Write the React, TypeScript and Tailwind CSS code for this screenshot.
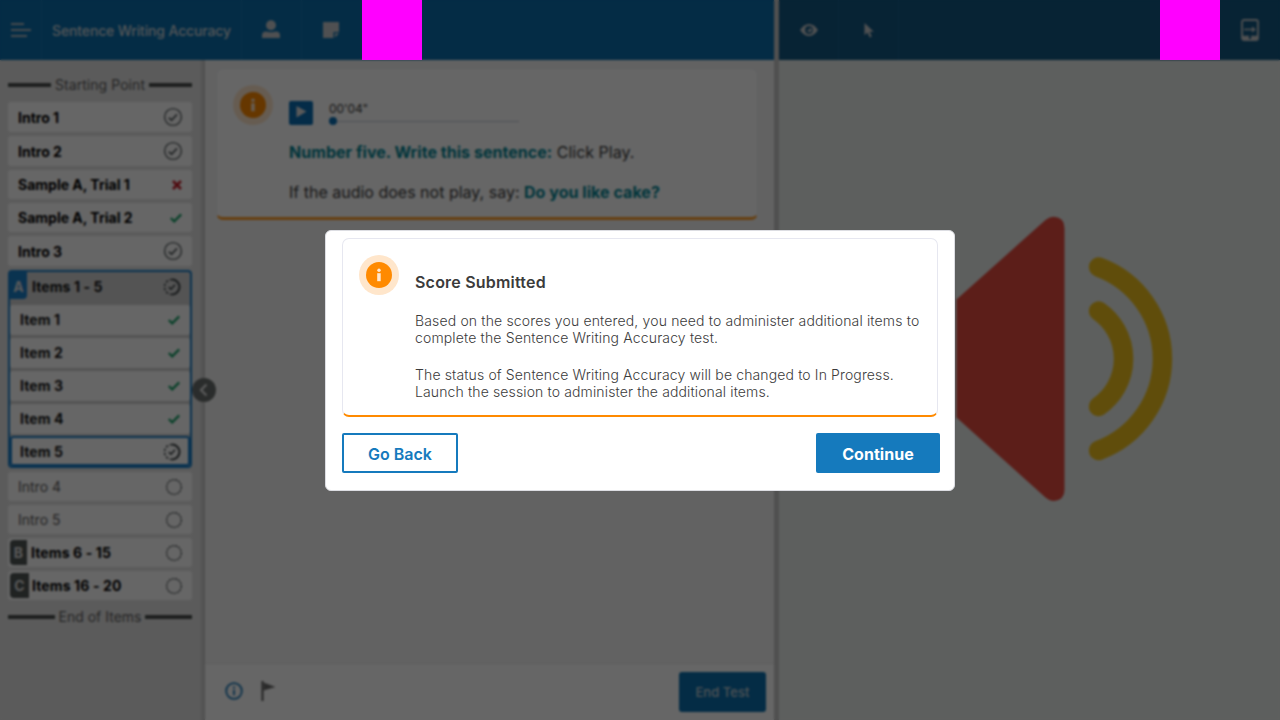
import type { ReactNode } from "react";

type Status = "circled" | "fail" | "pass" | "partial" | "todo";

function StatusIcon({ status }: { status: Status }) {
  if (status === "circled")
    return (
      <svg className="size-5" viewBox="0 0 20 20" fill="none">
        <circle cx="10" cy="10" r="8.4" stroke="#5f6668" strokeWidth="1.4" />
        <path d="M5.8 10.8 8.6 13.2 14 7.4" stroke="#5f6668" strokeWidth="1.8" />
      </svg>
    );
  if (status === "fail")
    return (
      <svg className="size-3" viewBox="0 0 12 12" fill="none">
        <path d="M2 2 10 10M10 2 2 10" stroke="#c8202c" strokeWidth="2.6" />
      </svg>
    );
  if (status === "pass")
    return (
      <svg className="h-3 w-3.5" viewBox="0 0 14 12" fill="none">
        <path d="M1.8 6 5.2 9.4 12.2 2.4" stroke="#16a066" strokeWidth="2.2" />
      </svg>
    );
  if (status === "partial")
    return (
      <svg className="size-[18px]" viewBox="0 0 18 18" fill="none">
        <path d="M9 1.5a7.5 7.5 0 0 1 0 15" stroke="#3c4244" strokeWidth="2" />
        <path d="M9 16.5a7.5 7.5 0 0 1 0-15" stroke="#3c4244" strokeWidth="1.5" strokeDasharray="2.4 1.8" />
        <path d="M5.8 9.2 8 11.2 12 6.8" stroke="#3c4244" strokeWidth="1.6" />
      </svg>
    );
  return (
    <svg className="size-[18px]" viewBox="0 0 18 18" fill="none">
      <circle cx="9" cy="9" r="7.3" stroke="#4a5052" strokeWidth="1.3" strokeDasharray="2.2 1" />
    </svg>
  );
}

function Row({ label, status, className }: { label: string; status: Status; className: string }) {
  return (
    <div className={`flex shrink-0 items-center justify-between rounded-[3px] bg-white pl-2.5 pr-[9px] text-[14px] leading-none ${className}`}>
      <span className="whitespace-nowrap">{label}</span>
      <StatusIcon status={status} />
    </div>
  );
}

function IntroRow({ label }: { label: string }) {
  return (
    <div className="mb-1 flex h-[30px] items-center justify-between rounded-[3px] bg-white pl-2.5 pr-[9px] text-[14px] font-bold leading-none text-black">
      <span className="whitespace-nowrap pt-0.5">{label}</span>
      <StatusIcon status="circled" />
    </div>
  );
}

function GroupRow({ letter, label, badge }: { letter: string; label: string; badge: string }) {
  return (
    <div className="mb-[4px] flex h-[29px] items-center rounded-[3px] bg-white pl-0.5 pr-[9px] text-[14px] font-bold leading-none text-black">
      <span className={`flex h-[25px] items-center justify-center rounded-l-[4px] bg-[#505756] text-[#e0e0e0] ${badge}`}>{letter}</span>
      <span className="flex-1 whitespace-nowrap tracking-[0.12px]">{label}</span>
      <StatusIcon status="todo" />
    </div>
  );
}

function Divider({ label, className }: { label: string; className: string }) {
  return (
    <div className={`flex items-center gap-1 text-[14px] leading-none text-[#5d5d5d] ${className}`}>
      <span className="h-1 flex-1 bg-[#4a4f4e]" />
      <span className="whitespace-nowrap">{label}</span>
      <span className="h-1 flex-1 bg-[#4a4f4e]" />
    </div>
  );
}

function Cell({ children, className = "border-[#176292]" }: { children?: ReactNode; className?: string }) {
  return <div className={`flex h-full w-[60px] items-center justify-center border-r ${className}`}>{children}</div>;
}

function InfoBadge() {
  return (
    <span className="flex size-10 shrink-0 items-center justify-center rounded-full bg-[#ffe6cb]">
      <svg className="size-[26px]" viewBox="0 0 26 26">
        <circle cx="13" cy="13" r="13" fill="#ff8a00" />
        <circle cx="13" cy="8.2" r="1.7" fill="#ffe9d2" />
        <path d="M11.2 11.2h3.5v8h-3.5z" fill="#ffe9d2" />
      </svg>
    </span>
  );
}

function Sidebar() {
  return (
    <aside className="flex w-[200px] shrink-0 flex-col bg-[#e4e4e4] px-2 pt-[17px]">
      <Divider label="Starting Point" className="mb-[9px] h-4 tracking-[0.06px]" />
      <IntroRow label="Intro 1" />
      <IntroRow label="Intro 2" />
      <Row label="Sample A, Trial 1" status="fail" className="mb-1 h-[29px] font-bold text-black" />
      <Row label="Sample A, Trial 2" status="pass" className="mb-1 h-[29px] font-bold text-black" />
      <IntroRow label="Intro 3" />
      <div className="mb-1 flex h-[198px] flex-col rounded-[4px] border-2 border-[#1b7fc9] bg-[#d2d2d2] text-[14px] font-bold tracking-[0.09px] text-[#141414]">
        <div className="flex h-[33px] shrink-0 items-start pr-[9px] leading-none">
          <span className="mr-[5px] flex h-[27px] w-[17px] items-center justify-center rounded-br-[4px] bg-[#1b7fc9] pt-0.5 text-[#e0e0e0]">A</span>
          <span className="flex-1 whitespace-nowrap pt-2">Items 1 - 5</span>
          <span className="pt-1.5">
            <StatusIcon status="partial" />
          </span>
        </div>
        <Row label="Item 1" status="pass" className="mb-[3px] h-[30px]" />
        <Row label="Item 2" status="pass" className="mb-[3px] h-[30px]" />
        <Row label="Item 3" status="pass" className="mb-[3px] h-[30px]" />
        <Row label="Item 4" status="pass" className="mb-[2px] h-[30px]" />
        <Row label="Item 5" status="partial" className="h-[30px] border-2 border-[#1b7fc9] pl-2! pr-[7px]! pt-0.5" />
      </div>
      <Row label="Intro 4" status="todo" className="mb-1 h-[29px] text-[#5a5a5a]" />
      <Row label="Intro 5" status="todo" className="mb-1 h-[29px] text-[#5a5a5a]" />
      <GroupRow letter="B" label="Items 6 - 15" badge="w-[17px] mr-1" />
      <GroupRow letter="C" label="Items 16 - 20" badge="w-[19px] mr-[3px]" />
      <Divider label="End of Items" className="mt-[5px] h-4" />
    </aside>
  );
}

function MainPanel() {
  return (
    <main className="flex w-[569px] shrink-0 flex-col bg-[#f6f6f6]">
      <div className="flex-1 pl-[11px] pr-4 pt-2">
        <section className="flex h-[152px] rounded-[7px] border border-[#eef0f4] border-b-[3px] border-b-[#ff9d28] bg-white pl-4 pt-4">
          <InfoBadge />
          <div className="ml-4 pt-[14px] text-[16px] text-[#3a3a3a]">
            <div className="flex h-[26px] items-end gap-4">
              <span className="flex size-6 items-center justify-center rounded-[2px] bg-[#0a6eb4]">
                <svg className="mb-0.5 size-3" viewBox="0 0 12 12">
                  <path d="M1.5 0v11.5L11.5 5.5z" fill="#e0e0e0" />
                </svg>
              </span>
              <span className="flex h-full flex-col justify-between pt-0.5">
                <span className="text-[12px] leading-[15px] tracking-[-0.1px]">00'04"</span>
                <span className="flex w-[190px] items-center">
                  <span className="size-2 rounded-full bg-[#0a6eb4]" />
                  <span className="h-px flex-1 bg-[#c5cad8]" />
                </span>
              </span>
            </div>
            <p className="mt-[17px] whitespace-nowrap leading-5">
              <b className="tracking-[0.04px] text-[#008493]">Number five. Write this sentence:</b> Click Play.
            </p>
            <p className="mt-5 whitespace-nowrap leading-5">
              If the audio does not play, say: <b className="tracking-[0.04px] text-[#008493]">Do you like cake?</b>
            </p>
          </div>
        </section>
      </div>
      <footer className="flex h-[57px] items-center border-t border-[#e6e6e6] bg-white pl-5 pr-2">
        <svg className="mb-0.5 size-[18px]" viewBox="0 0 18 18" fill="none">
          <circle cx="9" cy="9" r="7.8" stroke="#1a78b8" strokeWidth="1.8" />
          <path d="M9 4.5v2M9 7.8v5.5" stroke="#1a78b8" strokeWidth="1.8" />
        </svg>
        <svg className="mb-0.5 ml-[17px] h-5 w-4" viewBox="0 0 16 20">
          <path d="M1.5 0h2v20h-2z" fill="#555" />
          <path d="M3.5 1.5 15.5 6l-12 3.5z" fill="#6a6a6a" />
        </svg>
        <button className="ml-auto h-10 w-[87px] rounded-[3px] bg-[#0a6eac] pt-0.5 text-[13px] font-medium tracking-[0.05px] text-[#c4ced4]">End Test</button>
      </footer>
    </main>
  );
}

function Stimulus() {
  return (
    <div className="flex w-[501px] shrink-0 bg-[#e9eeec]">
      <svg className="h-[660px] w-[501px]" viewBox="779 60 501 660" fill="none">
        <path d="M956.5 299.5 1045.5 220Q1050 216.5 1054 216.7 1064.5 217.5 1064.5 228V490Q1064.5 500 1054 501 1050 501 1045.5 497.5L956.5 417.5Z" fill="#e64b3f" />
        <path d="M1098.5 267A97.8 97.8 0 0 1 1098.5 450.5M1098.5 311A58 58 0 0 1 1098.5 406.5" stroke="#f0c11c" strokeWidth="19.5" strokeLinecap="round" />
      </svg>
    </div>
  );
}

function Toolbar() {
  return (
    <>
      <div className="flex h-[60px] w-[774px] items-center bg-[#0a6eac] text-[#cfd6db]">
        <Cell className="w-[42px]! border-[#1a78b4]">
          <svg className="h-3.5 w-5" viewBox="0 0 20 14">
            <path d="M0 1h13M0 7h20M0 13h16" stroke="#b4bdc3" strokeWidth="2" />
          </svg>
        </Cell>
        <Cell className="w-[200px]! border-[#1a78b4]">
          <span className="whitespace-nowrap pt-px text-[14px] font-medium tracking-[-0.14px]">Sentence Writing Accuracy</span>
        </Cell>
        <Cell className="border-[#1a78b4]">
          <svg className="mr-0.5 mb-0.5 h-[19px] w-[18px]" viewBox="0 0 18 19" fill="#c6c9cc">
            <circle cx="9" cy="5.2" r="5" />
            <path d="M0 18v-2.5Q0 11.5 4 11.5 9 13 14 11.5 18 11.5 18 15.5V18Z" />
          </svg>
        </Cell>
        <Cell className="border-[#1a78b4]">
          <svg className="mr-0.5 size-4" viewBox="0 0 16 16" fill="#c6c9cc">
            <path d="M0 0h16v10h-5.5v6H0zM12 11.2h4L12 15.5z" />
          </svg>
        </Cell>
      </div>
      <div className="h-[60px] w-[5px] bg-[#c7c7c7]" />
      <div className="flex h-[60px] flex-1 items-center bg-[#125782]">
        <Cell>
          <svg className="h-3 w-[18px]" viewBox="0 0 18 12">
            <path d="M0 6Q4 0 9 0T18 6Q14 12 9 12T0 6Z" fill="#c6c9cc" />
            <circle cx="9" cy="6" r="3.9" fill="#125782" />
            <circle cx="9.5" cy="6" r="2.2" fill="#c6c9cc" />
            <circle cx="8.5" cy="5" r="1.2" fill="#125782" />
          </svg>
        </Cell>
        <Cell>
          <svg className="h-[15px] w-2.5" viewBox="0 0 10 15">
            <path d="M.5 0v12.2l3-2.6 2.2 5 2.1-1-2.2-4.8H9.8Z" fill="#c6c9cc" />
          </svg>
        </Cell>
        <div className="ml-auto flex w-[60px] items-center justify-center">
          <svg className="mb-px h-[22px] w-[18px]" viewBox="0 0 18 22" fill="none" stroke="#c6c9cc">
            <rect x="1" y="1" width="16" height="20" rx="2" strokeWidth="1.8" />
            <path d="M1 18.5h7M10 18.5h7" strokeWidth="3.5" />
            <path d="M3 10.5h9" strokeWidth="1.6" />
            <path d="M11 7.5v6l4-3z" fill="#c6c9cc" stroke="none" />
          </svg>
        </div>
      </div>
    </>
  );
}

function ScoreDialog() {
  return (
    <div className="h-[261px] w-[630px] rounded-[6px] border border-[#dcdde2] bg-white px-4 pt-[7.5px] text-[#3b3b3b]">
      <section className="flex h-[179px] w-[596px] rounded-[7px] border border-[#e6e7f0] border-b-2 border-b-[#ff8a00] pl-4 pt-4">
        <InfoBadge />
        <div className="ml-4 whitespace-nowrap pt-[17px]">
          <h2 className="text-[16px] font-semibold leading-5 tracking-[0.2px]">Score Submitted</h2>
          <p className="mt-5 text-[14px] font-light leading-[17px] tracking-[0.15px]">
            Based on the scores you entered, you need to administer additional items to
            <br />
            complete the Sentence Writing Accuracy test.
          </p>
          <p className="mt-5 text-[14px] font-light leading-[17px] tracking-[0.13px]">
            The status of Sentence Writing Accuracy will be changed to In Progress.
            <br />
            Launch the session to administer the additional items.
          </p>
        </div>
      </section>
      <div className="mt-[16px] flex w-[598px] justify-between text-[16px]">
        <button className="h-10 w-[116px] rounded-[2px] border-2 border-[#157abd] pt-0.5 font-semibold text-[#157abd]">Go Back</button>
        <button className="h-10 w-[124px] rounded-[2px] bg-[#157abd] pt-0.5 font-bold tracking-[0.05px] text-white">Continue</button>
      </div>
    </div>
  );
}

export default function App() {
  return (
    <div className="relative h-[720px] w-[1280px] overflow-hidden font-['Inter',sans-serif]">
      <div className="flex h-full flex-col">
        <header className="flex h-[60px] shrink-0">
          <Toolbar />
        </header>
        <div className="flex flex-1">
          <Sidebar />
          <div className="w-[5px] bg-gradient-to-r from-[#dedede] to-[#c4c4c4]" />
          <MainPanel />
          <div className="w-[5px] bg-[#c7c7c7]" />
          <Stimulus />
        </div>
      </div>
      <span className="absolute left-[192px] top-[378px] flex size-6 items-center justify-center rounded-full bg-[#6a6f6e]">
        <svg className="size-3.5" viewBox="0 0 14 14" fill="none">
          <path d="M9.5 1.5 4 7l5.5 5.5" stroke="#e4e4e4" strokeWidth="2.2" />
        </svg>
      </span>
      <div className="absolute inset-0 flex items-center justify-center bg-black/60 backdrop-blur-[1px]">
        <ScoreDialog />
      </div>
      <div className="absolute left-[362px] top-0 h-[60px] w-[60px] bg-[#ff00ff]" />
      <div className="absolute left-[1160px] top-0 h-[60px] w-[60px] bg-[#ff00ff]" />
    </div>
  );
}
